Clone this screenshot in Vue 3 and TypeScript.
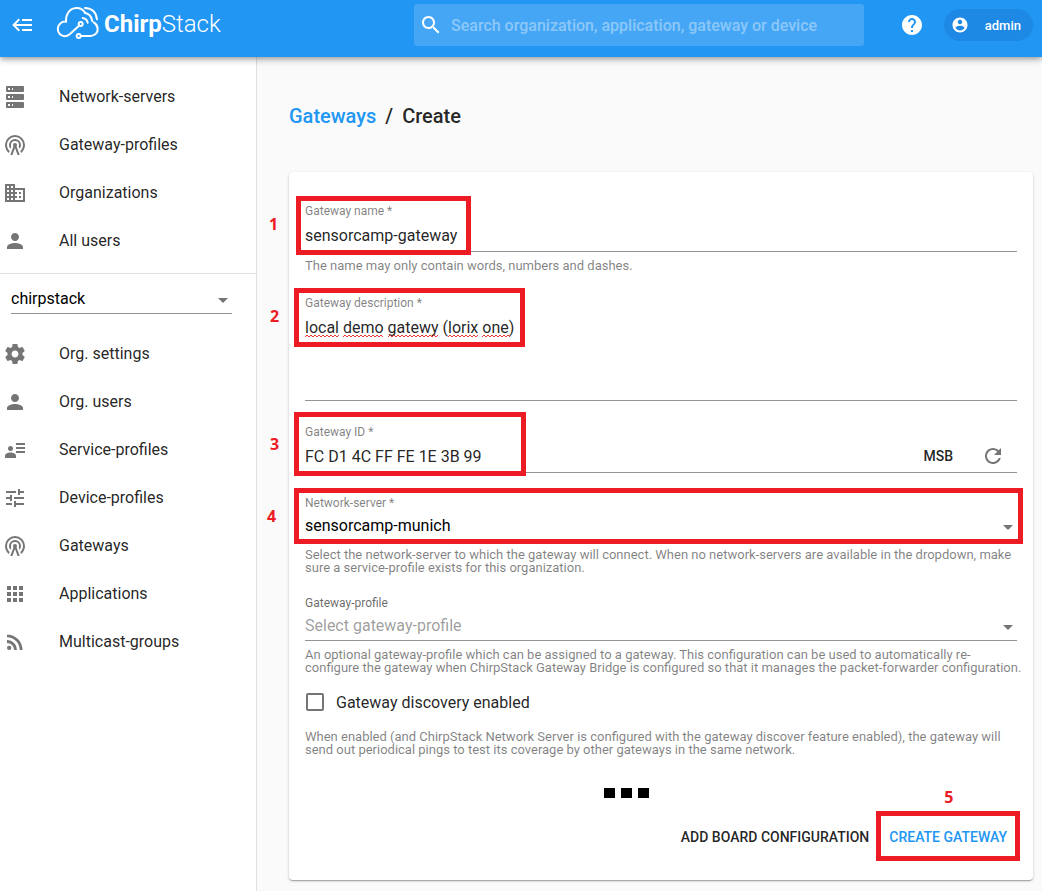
<script setup lang="ts">
import { ref } from 'vue'

interface NavItem {
  label: string
  icon: string
}

const icons: Record<string, string> = {
  menu: 'M5,13L9,17L7.6,18.42L1.18,12L7.6,5.58L9,7L5,11H21V13H5M21,6V8H11V6H21M21,16V18H11V16H21Z',
  search: 'M15.5 14h-.79l-.28-.27C15.41 12.59 16 11.11 16 9.5 16 5.91 13.09 3 9.5 3S3 5.91 3 9.5 5.91 16 9.5 16c1.61 0 3.09-.59 4.23-1.57l.27.28v.79l5 4.99L20.49 19l-4.99-5zm-6 0C7.01 14 5 11.99 5 9.5S7.01 5 9.5 5 14 7.01 14 9.5 11.99 14 9.5 14z',
  help: 'M12 2C6.48 2 2 6.48 2 12s4.48 10 10 10 10-4.48 10-10S17.52 2 12 2zm1 17h-2v-2h2v2zm2.07-7.75l-.9.92C13.45 12.9 13 13.5 13 15h-2v-.5c0-1.1.45-2.1 1.17-2.83l1.24-1.26c.37-.36.59-.86.59-1.41 0-1.1-.9-2-2-2s-2 .9-2 2H8c0-2.21 1.79-4 4-4s4 1.79 4 4c0 .88-.36 1.68-.93 2.25z',
  account: 'M12 2C6.48 2 2 6.48 2 12s4.48 10 10 10 10-4.48 10-10S17.52 2 12 2zm0 3c1.66 0 3 1.34 3 3s-1.34 3-3 3-3-1.34-3-3 1.34-3 3-3zm0 14.2c-2.5 0-4.71-1.28-6-3.22.03-1.99 4-3.08 6-3.08 1.99 0 5.97 1.09 6 3.08-1.29 1.94-3.5 3.22-6 3.22z',
  server: 'M4,1H20A1,1 0 0,1 21,2V6A1,1 0 0,1 20,7H4A1,1 0 0,1 3,6V2A1,1 0 0,1 4,1M4,9H20A1,1 0 0,1 21,10V14A1,1 0 0,1 20,15H4A1,1 0 0,1 3,14V10A1,1 0 0,1 4,9M4,17H20A1,1 0 0,1 21,18V22A1,1 0 0,1 20,23H4A1,1 0 0,1 3,22V18A1,1 0 0,1 4,17M9,5H10V3H9V5M9,13H10V11H9V13M9,21H10V19H9V21M5,3V5H7V3H5M5,11V13H7V11H5M5,19V21H7V19H5Z',
  tower: 'M12,10A2,2 0 0,1 14,12C14,12.5 13.82,12.94 13.53,13.29L16.7,22H14.57L12,14.93L9.43,22H7.3L10.47,13.29C10.18,12.94 10,12.5 10,12A2,2 0 0,1 12,10M12,8A4,4 0 0,0 8,12C8,12.5 8.1,13 8.28,13.46L7.4,15.86C6.53,14.81 6,13.47 6,12A6,6 0 0,1 12,6A6,6 0 0,1 18,12C18,13.47 17.47,14.81 16.6,15.86L15.72,13.46C15.9,13 16,12.5 16,12A4,4 0 0,0 12,8M12,4A8,8 0 0,0 4,12C4,14.36 5,16.5 6.64,17.94L5.92,19.94C3.54,18.11 2,15.23 2,12A10,10 0 0,1 12,2A10,10 0 0,1 22,12C22,15.23 20.46,18.11 18.08,19.94L17.36,17.94C19,16.5 20,14.36 20,12A8,8 0 0,0 12,4Z',
  domain: 'M12 7V3H2v18h20V7H12zM6 19H4v-2h2v2zm0-4H4v-2h2v2zm0-4H4V9h2v2zm0-4H4V5h2v2zm4 12H8v-2h2v2zm0-4H8v-2h2v2zm0-4H8V9h2v2zm0-4H8V5h2v2zm10 12h-8v-2h2v-2h-2v-2h2v-2h-2V9h8v10zm-2-8h-2v2h2v-2zm0 4h-2v2h2v-2z',
  person: 'M12 12c2.21 0 4-1.79 4-4s-1.79-4-4-4-4 1.79-4 4 1.79 4 4 4zm0 2c-2.67 0-8 1.34-8 4v2h16v-2c0-2.66-5.33-4-8-4z',
  settings: 'M19.43 12.98c.04-.32.07-.64.07-.98s-.03-.66-.07-.98l2.11-1.65c.19-.15.24-.42.12-.64l-2-3.46c-.12-.22-.39-.3-.61-.22l-2.49 1c-.52-.4-1.08-.73-1.69-.98l-.38-2.65C14.46 2.18 14.25 2 14 2h-4c-.25 0-.46.18-.49.42l-.38 2.65c-.61.25-1.17.59-1.69.98l-2.49-1c-.23-.09-.49 0-.61.22l-2 3.46c-.13.22-.07.49.12.64l2.11 1.65c-.04.32-.07.65-.07.98s.03.66.07.98l-2.11 1.65c-.19.15-.24.42-.12.64l2 3.46c.12.22.39.3.61.22l2.49-1c.52.4 1.08.73 1.69.98l.38 2.65c.03.24.24.42.49.42h4c.25 0 .46-.18.49-.42l.38-2.65c.61-.25 1.17-.59 1.69-.98l2.49 1c.23.09.49 0 .61-.22l2-3.46c.12-.22.07-.49-.12-.64l-2.11-1.65zM12 15.5c-1.93 0-3.5-1.57-3.5-3.5s1.57-3.5 3.5-3.5 3.5 1.57 3.5 3.5-1.57 3.5-3.5 3.5z',
  details: 'M13 5h9v2h-9zM13 9h9v2h-9zM13 13h9v2h-9zM7.5 8A2.5 2.5 0 1 1 7.5 13A2.5 2.5 0 1 1 7.5 8M7.5 14.5C10.5 14.5 13 15.9 13 17.8V20H2V17.8C2 15.9 4.5 14.5 7.5 14.5Z',
  tune: 'M3 17v2h6v-2H3zM3 5v2h10V5H3zm10 16v-2h8v-2h-8v-2h-2v6h2zM7 9v2H3v2h4v2h2V9H7zm14 4v-2H11v2h10zm-6-4h2V7h4V5h-4V3h-2v6z',
  apps: 'M4 8h4V4H4v4zm6 12h4v-4h-4v4zm-6 0h4v-4H4v4zm0-6h4v-4H4v4zm6 0h4v-4h-4v4zm6-10v4h4V4h-4zm-6 4h4V4h-4v4zm6 6h4v-4h-4v4zm0 6h4v-4h-4v4z',
  rss: 'M6.18 15.64A2.18 2.18 0 1 1 6.18 20A2.18 2.18 0 1 1 6.18 15.64M4 4.44v2.83c7.03 0 12.73 5.7 12.73 12.73h2.83c0-8.59-6.97-15.56-15.56-15.56zm0 5.66v2.83c3.9 0 7.07 3.17 7.07 7.07h2.83c0-5.47-4.43-9.9-9.9-9.9z',
  refresh: 'M17.65 6.35C16.2 4.9 14.21 4 12 4c-4.42 0-7.99 3.58-7.99 8s3.57 8 7.99 8c3.73 0 6.84-2.55 7.73-6h-2.08c-.82 2.33-3.04 4-5.65 4-3.31 0-6-2.69-6-6s2.69-6 6-6c1.66 0 3.14.69 4.22 1.78L13 11h7V4l-2.35 2.35z',
  arrow: 'M7 10l5 5 5-5z',
}

const globalItems: NavItem[] = [
  { label: 'Network-servers', icon: 'server' },
  { label: 'Gateway-profiles', icon: 'tower' },
  { label: 'Organizations', icon: 'domain' },
  { label: 'All users', icon: 'person' },
]

const orgItems: NavItem[] = [
  { label: 'Org. settings', icon: 'settings' },
  { label: 'Org. users', icon: 'person' },
  { label: 'Service-profiles', icon: 'details' },
  { label: 'Device-profiles', icon: 'tune' },
  { label: 'Gateways', icon: 'tower' },
  { label: 'Applications', icon: 'apps' },
  { label: 'Multicast-groups', icon: 'rss' },
]

const search = ref('')
const organization = ref('chirpstack')
const gatewayName = ref('sensorcamp-gateway')
const description = ref('local demo gatewy (lorix one)')
const gatewayId = ref('FC D1 4C FF FE 1E 3B 99')
const networkServer = ref('sensorcamp-munich')
const gatewayProfile = ref('')
const discovery = ref(false)

/* Start and end of each word marked by the spelling check. */
const misspelled: [number, number][] = [[0, 34], [38, 79], [83, 134], [143, 173], [177, 205]]

function squiggle([from, to]: [number, number]): string {
  let d = `M${from} 3`
  for (let x = from + 2, up = true; x <= to; x += 2, up = !up) d += `L${x} ${up ? 1 : 3}`
  return d
}
</script>

<template>
  <div class="app">
    <header class="topbar">
      <button class="icon-btn" type="button" aria-label="Toggle menu">
        <svg class="icon" viewBox="0 0 24 24"><path :d="icons.menu" /></svg>
      </button>
      <a class="brand" href="#">
        <svg class="cloud" viewBox="168 12 132 105" aria-hidden="true">
          <path d="M240 74L213 99Q205 106 196 106A22 22 0 0 1 201 62C200 40 211 22 232 21Q247 20 257 33" />
          <path d="M247 105H274C289 104 297 95 296 82C295 73 291 68 284 64" />
          <path d="M258 21Q290 22 294 55" />
          <path d="M257 35Q277 39 280 60" />
          <path d="M251 51Q264 53 266 65" />
          <circle cx="245" cy="69" r="6" />
          <circle cx="239" cy="105" r="6" />
        </svg>
        <span class="wordmark"><b>Chirp</b><span>Stack</span></span>
      </a>
      <label class="search">
        <svg class="icon" viewBox="0 0 24 24" aria-hidden="true"><path :d="icons.search" /></svg>
        <input v-model="search" type="search" aria-label="Search" placeholder="Search organization, application, gateway or device" />
      </label>
      <a class="help" href="#" aria-label="Help">
        <svg class="icon" viewBox="0 0 24 24"><path :d="icons.help" /></svg>
      </a>
      <button class="chip" type="button">
        <svg class="chip-icon" viewBox="0 0 24 24" aria-hidden="true"><path :d="icons.account" /></svg>
        <span>admin</span>
      </button>
    </header>

    <div class="columns">
      <nav class="sidebar">
        <ul class="nav-list">
          <li v-for="item in globalItems" :key="item.label">
            <a class="nav-link" href="#">
              <svg class="icon" viewBox="0 0 24 24" aria-hidden="true"><path :d="icons[item.icon]" /></svg>
              <span>{{ item.label }}</span>
            </a>
          </li>
        </ul>
        <div class="org-picker">
          <div class="select-wrap">
            <select v-model="organization" class="control" aria-label="Organization">
              <option value="chirpstack">chirpstack</option>
            </select>
            <svg class="icon arrow" viewBox="0 0 24 24" aria-hidden="true"><path :d="icons.arrow" /></svg>
          </div>
        </div>
        <ul class="nav-list">
          <li v-for="item in orgItems" :key="item.label">
            <a class="nav-link" href="#">
              <svg class="icon" viewBox="0 0 24 24" aria-hidden="true"><path :d="icons[item.icon]" /></svg>
              <span>{{ item.label }}</span>
            </a>
          </li>
        </ul>
      </nav>

      <main class="content">
        <h1 class="crumbs"><a href="#">Gateways</a><span>/</span><span>Create</span></h1>

        <form class="card" @submit.prevent>
          <div class="field roomy">
            <label for="name">Gateway name *</label>
            <input id="name" v-model="gatewayName" class="control" type="text" />
            <p class="hint">The name may only contain words, numbers and dashes.</p>
            <span class="mark mark-name"><b>1</b></span>
          </div>

          <div class="field roomy">
            <label for="description">Gateway description *</label>
            <textarea id="description" v-model="description" class="control area" spellcheck="false"></textarea>
            <svg class="squiggles" viewBox="0 0 210 4" aria-hidden="true">
              <path v-for="word in misspelled" :key="word[0]" :d="squiggle(word)" />
            </svg>
            <span class="mark mark-description"><b>2</b></span>
          </div>

          <div class="field">
            <label for="gateway-id">Gateway ID *</label>
            <div class="control id-row">
              <input id="gateway-id" v-model="gatewayId" type="text" />
              <button class="msb" type="button">MSB</button>
              <button class="icon-btn refresh" type="button" aria-label="Generate random ID">
                <svg class="icon" viewBox="0 0 24 24"><path :d="icons.refresh" /></svg>
              </button>
            </div>
            <span class="mark mark-id"><b>3</b></span>
          </div>

          <div class="field tight">
            <label for="network-server">Network-server *</label>
            <div class="select-wrap">
              <select id="network-server" v-model="networkServer" class="control">
                <option value="sensorcamp-munich">sensorcamp-munich</option>
              </select>
              <svg class="icon arrow" viewBox="0 0 24 24" aria-hidden="true"><path :d="icons.arrow" /></svg>
            </div>
            <p class="hint">
              Select the network-server to which the gateway will connect. When no network-servers are available in the dropdown, make<br />
              sure a service-profile exists for this organization.
            </p>
            <span class="mark mark-server"><b>4</b></span>
          </div>

          <div class="field tight">
            <label class="dark" for="gateway-profile">Gateway-profile</label>
            <div class="select-wrap">
              <select id="gateway-profile" v-model="gatewayProfile" class="control empty">
                <option value="">Select gateway-profile</option>
              </select>
              <svg class="icon arrow" viewBox="0 0 24 24" aria-hidden="true"><path :d="icons.arrow" /></svg>
            </div>
            <p class="hint">
              An optional gateway-profile which can be assigned to a gateway. This configuration can be used to automatically re-<br />
              configure the gateway when ChirpStack Gateway Bridge is configured so that it manages the packet-forwarder configuration.
            </p>
          </div>

          <div class="check-field">
            <label class="check"><input v-model="discovery" type="checkbox" /><span>Gateway discovery enabled</span></label>
            <p class="hint">
              When enabled (and ChirpStack Network Server is configured with the gateway discover feature enabled), the gateway will<br />
              send out periodical pings to test its coverage by other gateways in the same network.
            </p>
          </div>

          <div class="dots" aria-hidden="true"><i></i><i></i><i></i></div>

          <div class="actions">
            <button type="button">ADD BOARD CONFIGURATION</button>
            <div class="submit-wrap">
              <button class="primary" type="submit">CREATE GATEWAY</button>
              <span class="mark mark-submit"><b>5</b></span>
            </div>
          </div>
        </form>
      </main>
    </div>
  </div>
</template>

<style>
body {
  margin: 0;
  background: #fafafa;
}
</style>

<style scoped>
.app,
.app * {
  box-sizing: border-box;
}
.app {
  min-height: 100vh;
  display: flex;
  flex-direction: column;
  font-family: Roboto, "Liberation Sans", sans-serif;
  font-size: 16px;
  color: rgba(0, 0, 0, 0.87);
}
button,
input,
select,
textarea {
  font: inherit;
  color: inherit;
  border: 0;
  padding: 0;
  margin: 0;
  background: none;
  outline: 0;
}
a {
  color: inherit;
  text-decoration: none;
}
.icon {
  width: 24px;
  height: 24px;
  fill: currentColor;
  flex: none;
  display: block;
}

.topbar {
  position: relative;
  z-index: 2;
  height: 57px;
  padding: 0 9px 7px 11px;
  display: flex;
  align-items: center;
  background: #2196f3;
  color: #fff;
  box-shadow: 0 2px 4px -1px rgba(0, 0, 0, 0.2), 0 4px 5px 0 rgba(0, 0, 0, 0.14), 0 1px 10px 0 rgba(0, 0, 0, 0.12);
}
.brand {
  display: flex;
  align-items: center;
  margin-left: 20px;
  width: 359px;
}
.cloud {
  width: 44px;
  height: 35px;
  margin-top: -6px;
  fill: none;
  stroke: #fff;
  stroke-width: 6;
  stroke-linecap: round;
}
.wordmark {
  font-size: 24px;
  line-height: 28px;
  font-weight: 300;
  margin: -2px 0 0 5px;
}
.wordmark b {
  font-weight: 700;
}
.search {
  flex: 1;
  height: 42px;
  display: flex;
  align-items: center;
  gap: 8px;
  padding: 0 5px;
  border-radius: 3px;
  background: rgba(255, 255, 255, 0.16);
}
.search input {
  flex: 1;
  min-width: 0;
  font-weight: 500;
}
.search input::placeholder {
  color: rgba(255, 255, 255, 0.4);
  opacity: 1;
}
.help {
  margin: 0 20px 0 36px;
}
.chip {
  height: 32px;
  padding: 0 12px 0 5px;
  border-radius: 16px;
  display: flex;
  align-items: center;
  gap: 14px;
  background: #1e88e5;
  font-size: 13px;
  font-weight: 500;
}
.chip-icon {
  width: 22px;
  height: 18px;
  fill: #fff;
}

.columns {
  flex: 1;
  display: flex;
}
.sidebar {
  width: 257px;
  flex: none;
  padding-top: 16px;
  background: #fff;
  border-right: 1px solid #e0e0e0;
}
.nav-list {
  list-style: none;
  margin: 0;
  padding: 0;
}
.nav-link {
  height: 48px;
  padding-left: 3px;
  display: flex;
  align-items: center;
  gap: 32px;
}
.nav-link span {
  padding-bottom: 2px;
}
.nav-link .icon {
  color: #757575;
}
.org-picker {
  margin-top: 8px;
  padding: 10px 24px 16px 11px;
  border-top: 1px solid #e0e0e0;
}
.select-wrap {
  position: relative;
}
.control {
  display: block;
  width: 100%;
  height: 33px;
  border-bottom: 1px solid #949494;
}
select.control {
  appearance: none;
  height: 30px;
  color: #000;
}
select.empty {
  color: rgba(0, 0, 0, 0.4);
}
.arrow {
  position: absolute;
  right: -3px;
  top: 4px;
  color: #757575;
  pointer-events: none;
}

.content {
  flex: 1;
  min-width: 0;
  padding: 45px 9px 11px 32px;
}
.crumbs {
  margin: 0 0 42px;
  display: flex;
  gap: 9px;
  font-size: 20px;
  line-height: 28px;
  font-weight: 500;
}
.crumbs a {
  color: #2196f3;
}
.card {
  padding: 33px 16px 25px;
  display: flex;
  flex-direction: column;
  background: #fff;
  border-radius: 4px;
  box-shadow: 0 1px 3px 0 rgba(0, 0, 0, 0.2), 0 1px 1px 0 rgba(0, 0, 0, 0.14), 0 2px 1px -1px rgba(0, 0, 0, 0.12);
}
.field {
  position: relative;
  display: flex;
  flex-direction: column;
  gap: 2px;
  margin-bottom: 24px;
}
.field.roomy {
  margin-bottom: 25px;
}
.field.tight {
  margin-bottom: 23px;
}
.field > label {
  font-size: 12px;
  line-height: 12px;
  color: rgba(0, 0, 0, 0.5);
}
.field > label.dark {
  color: rgba(0, 0, 0, 0.6);
}
.area {
  height: 90px;
  padding-top: 7px;
  line-height: 20px;
  resize: none;
}
.hint {
  margin: 5px -8px 0 0;
  font-size: 13px;
  line-height: 13px;
  color: rgba(0, 0, 0, 0.5);
}
.id-row {
  display: flex;
  align-items: center;
}
.id-row input {
  flex: 1;
  min-width: 0;
}
.msb {
  font-size: 14px;
  font-weight: 500;
}
.icon-btn {
  display: block;
}
.refresh {
  margin: 0 12px 0 28px;
  color: #757575;
}
.squiggles {
  position: absolute;
  left: 0;
  top: 37px;
  width: 210px;
  height: 4px;
  fill: none;
  stroke: #e53935;
}
.check {
  height: 46px;
  display: flex;
  align-items: center;
  gap: 12px;
}
.check input {
  appearance: none;
  width: 18px;
  height: 18px;
  margin-left: 1px;
  border: 2px solid #757575;
  border-radius: 2px;
}
.check input:checked {
  background: #2196f3;
}
.check-field {
  margin-top: -18px;
}
.dots {
  display: flex;
  justify-content: center;
  gap: 6px;
  margin: 32px 69px 21px 0;
}
.dots i {
  width: 11px;
  height: 10px;
  background: #000;
}
.actions {
  display: flex;
  justify-content: flex-end;
  gap: 20px;
}
.actions button {
  height: 36px;
  font-size: 14px;
  font-weight: 500;
}
.actions .primary {
  color: #2196f3;
}
.submit-wrap {
  position: relative;
  padding-right: 10px;
}

/* Numbered frames drawn over the form */
.mark {
  position: absolute;
  border: 5px solid #ed1c24;
  pointer-events: none;
}
.mark b {
  position: absolute;
  left: -32px;
  top: 13px;
  font: 700 16px/20px "Noto Sans", sans-serif;
  color: #ed1c24;
}
.mark-name {
  left: -9px;
  top: -9px;
  width: 175px;
  height: 59px;
}
.mark-description {
  left: -11px;
  top: -9px;
  width: 231px;
  height: 59px;
}
.mark-description b {
  left: -29px;
}
.mark-id {
  left: -11px;
  top: -14px;
  width: 232px;
  height: 64px;
}
.mark-id b {
  left: -29px;
  top: 17px;
}
.mark-server {
  left: -11px;
  right: -6px;
  top: -9px;
  height: 56px;
}
.mark-submit {
  left: -13px;
  right: -3px;
  top: -8px;
  height: 50px;
}
.mark-submit b {
  left: 63px;
  top: -29px;
}
</style>
